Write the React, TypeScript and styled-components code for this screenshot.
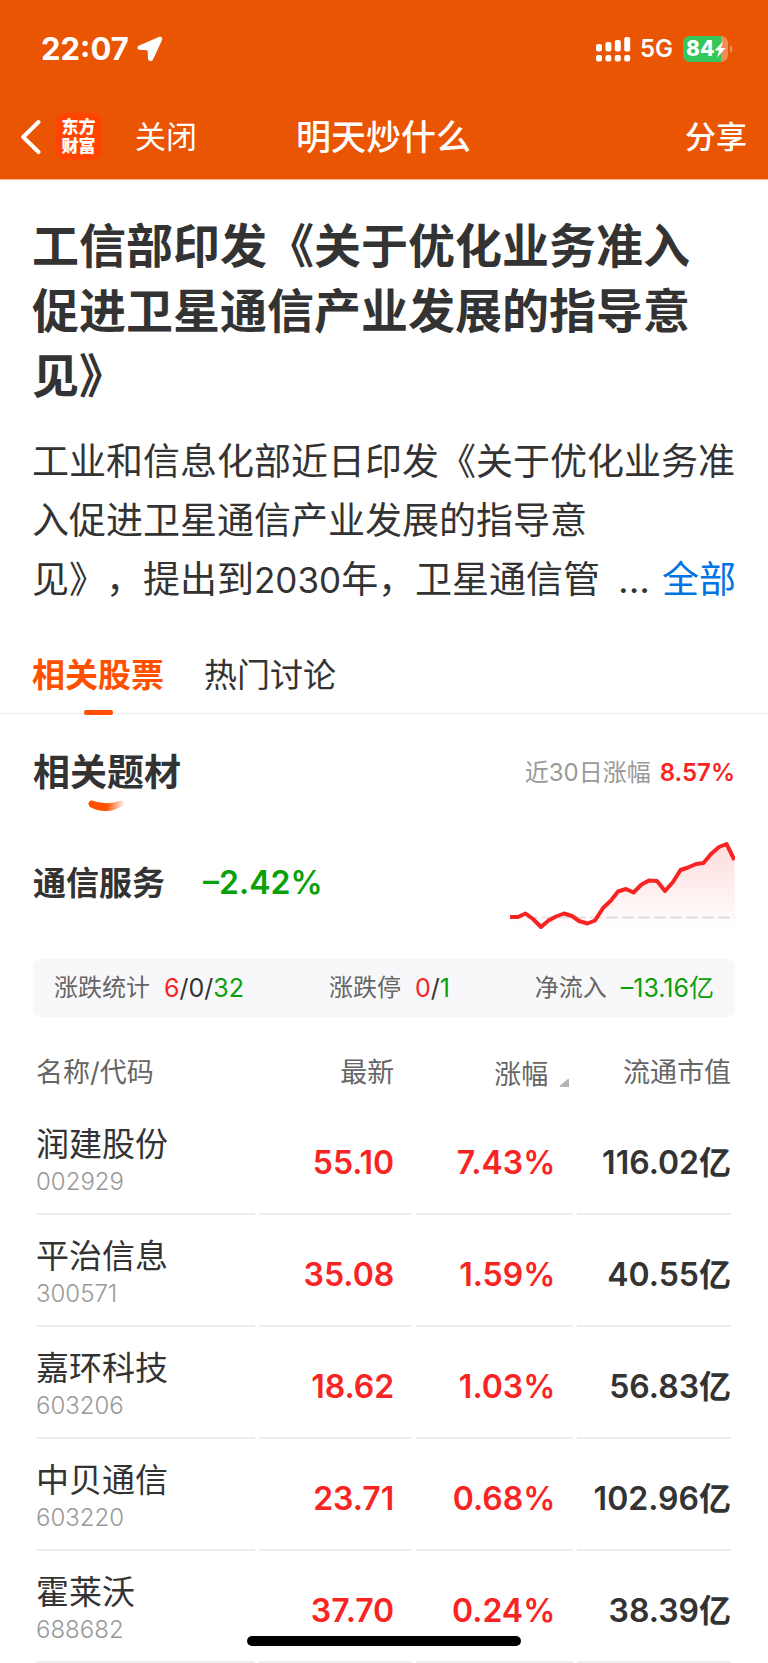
import React, { useState } from "react";
import styled, { createGlobalStyle } from "styled-components";

const color = {
  brand: "#ea5504",
  accent: "#ff5000",
  text: "#333333",
  label: "#666666",
  muted: "#999999",
  link: "#0073e6",
  rise: "#f82424",
  fall: "#0aa00a",
  line: "#eeeeee",
};

type Tone = "rise" | "fall" | "text";

const GlobalStyle = createGlobalStyle`
  *, *::before, *::after { box-sizing: border-box; }
  body {
    margin: 0;
    background: #ffffff;
    color: ${color.text};
    font-family: Inter, "Noto Sans CJK SC", sans-serif;
    text-spacing-trim: space-all;
  }
  h1, h2, h3, p { margin: 0; }
  button { border: 0; padding: 0; background: none; color: inherit; font: inherit; }
`;

const Page = styled.div`
  position: relative;
`;

const Header = styled.header`
  background: ${color.brand};
  border-bottom: 1px solid #f7b48f;
  color: #ffffff;
`;

const StatusBar = styled.div`
  display: flex;
  align-items: center;
  justify-content: space-between;
  height: 98px;
  padding: 0 35px 0 41px;
`;

const StatusGroup = styled.div`
  display: flex;
  align-items: center;
`;

const Clock = styled.span`
  margin-right: 8px;
  font-size: 31px;
  font-weight: 700;
  line-height: 36px;
`;

const Network = styled.span`
  margin: 0 10px 0 9px;
  font-size: 24px;
  font-weight: 600;
  line-height: 30px;
`;

const Battery = styled.span`
  display: flex;
  align-items: center;
  width: 45px;
  height: 26px;
  padding-left: 3px;
  border-radius: 7px;
  background: linear-gradient(90deg, #34c759 38px, #f28c55 38px);
  font-size: 21px;
  font-weight: 800;
  line-height: 26px;
`;

const NavBar = styled.nav`
  display: grid;
  grid-template-columns: 1fr auto 1fr;
  align-items: center;
  height: 81px;
  padding: 0 21px 4px 20px;
`;

const NavStart = styled.div`
  display: flex;
  align-items: center;
`;

const NavButton = styled.button<{ $weight?: number }>`
  display: flex;
  font-size: 31px;
  font-weight: ${(p) => p.$weight ?? 400};
  line-height: 46px;
`;

const EndButton = styled(NavButton)`
  justify-self: end;
`;

const AppLogo = styled.span`
  display: grid;
  place-content: center;
  width: 47px;
  height: 47px;
  margin: 0 33px 0 14px;
  border-radius: 10px;
  background: #ff4400;
  font-size: 17px;
  font-weight: 900;
  line-height: 19px;
`;

const NavTitle = styled.h1`
  font-size: 35px;
  font-weight: 500;
  line-height: 48px;
`;

const Article = styled.article`
  padding: 33px 32px 0;
`;

const Headline = styled.h2`
  font-size: 47px;
  font-weight: 600;
  line-height: 65px;
`;

const Summary = styled.p`
  margin-top: 24px;
  font-size: 37px;
  line-height: 59px;
`;

const SummaryEnd = styled.span`
  display: flex;
  justify-content: space-between;
`;

const Year = styled.span`
  font-size: 35px;
`;

const MoreLink = styled.a`
  margin-left: 12px;
  color: ${color.link};
  text-decoration: none;
`;

const TabList = styled.div`
  display: flex;
  gap: 40px;
  margin-top: 27px;
  padding: 0 32px;
  border-bottom: 1px solid ${color.line};
`;

const Tab = styled.button<{ $active: boolean }>`
  position: relative;
  height: 76px;
  color: ${(p) => (p.$active ? color.accent : color.text)};
  font-size: 33px;
  font-weight: ${(p) => (p.$active ? 600 : 400)};
  line-height: 76px;

  &::after {
    content: "";
    display: ${(p) => (p.$active ? "block" : "none")};
    position: absolute;
    bottom: -2px;
    left: 50%;
    width: 29px;
    height: 5px;
    margin-left: -14px;
    border-radius: 2px;
    background: ${color.accent};
  }
`;

const Section = styled.section`
  padding: 0 33px;
`;

const SectionHead = styled.div`
  display: flex;
  align-items: center;
  justify-content: space-between;
  height: 86px;
  margin-top: 16px;
`;

const SectionTitle = styled.h2`
  position: relative;
  font-size: 37px;
  font-weight: 600;
  line-height: 54px;

  svg {
    position: absolute;
    top: 54px;
    left: 55px;
  }
`;

const Period = styled.p`
  display: flex;
  gap: 9px;
  color: ${color.muted};
  font-size: 24px;
  line-height: 36px;
`;

const Value = styled.span<{ $tone: Tone; $weight?: number }>`
  color: ${(p) => color[p.$tone]};
  font-weight: ${(p) => p.$weight ?? 400};
`;

const Theme = styled.div`
  display: flex;
  align-items: center;
  height: 134px;
  font-size: 32px;
  line-height: 48px;

  svg {
    margin: 6px 0 0 auto;
  }
`;

const ThemeName = styled.h3`
  margin-right: 38px;
  font-size: 33px;
  font-weight: 600;
`;

const Stats = styled.dl`
  display: flex;
  justify-content: space-between;
  margin: 9px 0 0;
  padding: 11px 21px;
  border-radius: 8px;
  background: #f8f8fa;
  font-size: 24px;
  line-height: 36px;
`;

const Stat = styled.div`
  display: flex;
  gap: 14px;

  dt { color: ${color.label}; }
  dd { margin: 0; font-size: 25px; }
`;

const StockTable = styled.table`
  width: calc(100% - 65px);
  margin: 26px 33px 0 32px;
  table-layout: fixed;
  border-collapse: separate;
  border-spacing: 4px 0;
`;

const HeadCell = styled.th<{ $width: string; $end?: number }>`
  width: ${(p) => p.$width};
  height: 60px;
  padding: 0 ${(p) => p.$end ?? 0}px 0 0;
  color: ${color.label};
  font-size: 27px;
  font-weight: 400;
  line-height: 40px;
  text-align: right;

  &:first-child { text-align: left; }
`;

const SortButton = styled.button`
  display: inline-flex;
  align-items: center;
  gap: 11px;
  padding-top: 4px;

  svg { margin-top: 14px; }
`;

const NameCell = styled.th`
  height: 112px;
  padding: 4px 0 0;
  border-bottom: 2px solid ${color.line};
  text-align: left;
  font-weight: 400;
`;

const StockName = styled.span`
  display: block;
  font-size: 33px;
  line-height: 44px;
`;

const StockCode = styled.span`
  display: block;
  color: ${color.muted};
  font-size: 24px;
  font-weight: 300;
  line-height: 32px;
`;

const NumberCell = styled.td<{ $tone: Tone; $end?: number }>`
  padding: 10px ${(p) => p.$end ?? 0}px 0 0;
  border-bottom: 2px solid ${color.line};
  color: ${(p) => color[p.$tone]};
  font-size: 32px;
  font-weight: 600;
  line-height: 48px;
  text-align: right;
  white-space: nowrap;
`;

const HomeIndicator = styled.div`
  position: fixed;
  bottom: 17px;
  left: 50%;
  width: 274px;
  height: 10px;
  border-radius: 5px;
  background: #000000;
  transform: translateX(-50%);
`;

const LocationIcon = () => (
  <svg width="26" height="26" viewBox="0 0 26 26" aria-hidden="true">
    <path
      d="M22.6 1.6 L2 10.4 Q0.4 11.6 2 13 L10.2 13.4 Q11.4 13.6 11.4 14.8 L11.8 23 Q13.4 25.4 15.2 23.4 L24.4 3.4 Q24.8 1 22.6 1.6 Z"
      fill="#fff"
      stroke="#fff"
      strokeWidth="1.6"
      strokeLinejoin="round"
    />
  </svg>
);

const SignalIcon = () => (
  <svg width="35" height="25" viewBox="0 0 35 25" fill="#fff" aria-hidden="true">
    {[7, 5, 3, 0].map((top, i) => (
      <React.Fragment key={top}>
        <rect x={i * 9.4} y={top} width="6" height={14.5 - top} rx="2" />
        <rect x={i * 9.4} y="18" width="6" height="6.5" rx="2" />
      </React.Fragment>
    ))}
  </svg>
);

const BoltIcon = () => (
  <svg width="12" height="17" viewBox="0 0 12 17" aria-hidden="true">
    <path d="M9 0.5 L0.5 9.6 L5 9.6 L3.2 16.5 L11.6 7 L7 7 Z" fill="#fff" />
  </svg>
);

const BatteryTip = () => (
  <svg width="5" height="8" viewBox="0 0 5 8" aria-hidden="true">
    <path d="M2 0 Q4.6 1.4 4.6 4 Q4.6 6.6 2 8 Z" fill="#f28c55" />
  </svg>
);

const BackIcon = () => (
  <svg width="21" height="36" viewBox="0 0 21 36" aria-hidden="true">
    <path
      d="M18.5 3 L3.2 18 L18.5 33"
      fill="none"
      stroke="#fff"
      strokeWidth="4"
      strokeLinecap="round"
      strokeLinejoin="round"
    />
  </svg>
);

const SmileMark = () => (
  <svg width="37" height="12" viewBox="0 0 37 12" aria-hidden="true">
    <defs>
      <linearGradient id="smile" x1="0" x2="1" y1="0" y2="0">
        <stop offset="0.5" stopColor={color.accent} />
        <stop offset="1" stopColor={color.accent} stopOpacity="0.05" />
      </linearGradient>
    </defs>
    <path
      d="M3.2 0.3 Q17 6 33.5 0.6 Q38.5 2.6 35.6 5.4 Q18 15.6 2 7 Q-1.8 2.6 3.2 0.3 Z"
      fill="url(#smile)"
    />
  </svg>
);

const SortMark = () => (
  <svg width="10" height="9" viewBox="0 0 10 9" aria-hidden="true">
    <path d="M10 2 Q10 0 8.6 1.2 L0.8 7.8 Q0 9 1.4 9 H10 Z" fill="#b4b4b4" />
  </svg>
);

const trend = [
  [0, 75], [8, 75], [15.5, 71.5], [23, 77], [31, 85], [38.5, 78.5], [46, 74.5],
  [54, 71.5], [62, 74], [69, 79], [77.5, 81.5], [85, 78.5], [93, 66], [101, 58.5],
  [108, 49.5], [116, 47], [123.5, 50.5], [131.5, 42.5], [139, 38.5], [147, 39],
  [155, 49], [163, 40], [170.5, 28], [178, 25.5], [186, 22], [193.5, 21],
  [201, 12], [209, 5], [216.5, 2], [224.5, 18],
];

const TrendChart = () => {
  const line = trend.map(([x, y]) => `${x},${y}`).join(" ");
  return (
    <svg width="225" height="88" viewBox="0 0 225 88" role="img" aria-label="近30日走势">
      <defs>
        <linearGradient id="trend" x1="0" x2="0" y1="0" y2="1">
          <stop offset="0" stopColor={color.rise} stopOpacity="0.16" />
          <stop offset="1" stopColor={color.rise} stopOpacity="0" />
        </linearGradient>
      </defs>
      <path d="M0 75.5 H225" stroke="#e2e2e2" strokeWidth="2" strokeDasharray="12 4" />
      <polygon points={`0,88 ${line} 225,88`} fill="url(#trend)" />
      <polyline points={line} fill="none" stroke={color.rise} strokeWidth="4" strokeLinejoin="round" />
    </svg>
  );
};

const stocks = [
  { name: "润建股份", code: "002929", price: "55.10", change: "7.43%", cap: "116.02亿" },
  { name: "平治信息", code: "300571", price: "35.08", change: "1.59%", cap: "40.55亿" },
  { name: "嘉环科技", code: "603206", price: "18.62", change: "1.03%", cap: "56.83亿" },
  { name: "中贝通信", code: "603220", price: "23.71", change: "0.68%", cap: "102.96亿" },
  { name: "霍莱沃", code: "688682", price: "37.70", change: "0.24%", cap: "38.39亿" },
];

const tabs = ["相关股票", "热门讨论"];

export default function App() {
  const [active, setActive] = useState(tabs[0]);

  return (
    <Page>
      <GlobalStyle />
      <Header>
        <StatusBar>
          <StatusGroup>
            <Clock>22:07</Clock>
            <LocationIcon />
          </StatusGroup>
          <StatusGroup>
            <SignalIcon />
            <Network>5G</Network>
            <Battery>
              84
              <BoltIcon />
            </Battery>
            <BatteryTip />
          </StatusGroup>
        </StatusBar>
        <NavBar>
          <NavStart>
            <NavButton aria-label="返回">
              <BackIcon />
            </NavButton>
            <AppLogo>
              <span>东方</span>
              <span>财富</span>
            </AppLogo>
            <NavButton>关闭</NavButton>
          </NavStart>
          <NavTitle>明天炒什么</NavTitle>
          <EndButton $weight={500}>分享</EndButton>
        </NavBar>
      </Header>

      <main>
        <Article>
          <Headline>工信部印发《关于优化业务准入促进卫星通信产业发展的指导意见》</Headline>
          <Summary>
            工业和信息化部近日印发《关于优化业务准入促进卫星通信产业发展的指导意
            <SummaryEnd>
              <span>
                见》，提出到<Year>2030</Year>年，卫星通信管
              </span>
              <span>
                ...<MoreLink href="#all">全部</MoreLink>
              </span>
            </SummaryEnd>
          </Summary>
        </Article>

        <TabList role="tablist">
          {tabs.map((tab) => (
            <Tab
              key={tab}
              role="tab"
              aria-selected={tab === active}
              $active={tab === active}
              onClick={() => setActive(tab)}
            >
              {tab}
            </Tab>
          ))}
        </TabList>

        <Section>
          <SectionHead>
            <SectionTitle>
              相关题材
              <SmileMark />
            </SectionTitle>
            <Period>
              近30日涨幅
              <Value $tone="rise" $weight={600}>8.57%</Value>
            </Period>
          </SectionHead>
          <Theme>
            <ThemeName>通信服务</ThemeName>
            <Value $tone="fall" $weight={600}>–2.42%</Value>
            <TrendChart />
          </Theme>
          <Stats>
            <Stat>
              <dt>涨跌统计</dt>
              <dd>
                <Value $tone="rise">6</Value>/0/<Value $tone="fall">32</Value>
              </dd>
            </Stat>
            <Stat>
              <dt>涨跌停</dt>
              <dd>
                <Value $tone="rise">0</Value>/<Value $tone="fall">1</Value>
              </dd>
            </Stat>
            <Stat>
              <dt>净流入</dt>
              <dd>
                <Value $tone="fall">–13.16亿</Value>
              </dd>
            </Stat>
          </Stats>
        </Section>

        <StockTable>
          <thead>
            <tr>
              <HeadCell $width="32%">名称/代码</HeadCell>
              <HeadCell $width="22.5%" $end={18}>最新</HeadCell>
              <HeadCell $width="23%" $end={4}>
                <SortButton>
                  涨幅
                  <SortMark />
                </SortButton>
              </HeadCell>
              <HeadCell $width="22.5%">流通市值</HeadCell>
            </tr>
          </thead>
          <tbody>
            {stocks.map((stock) => (
              <tr key={stock.code}>
                <NameCell scope="row">
                  <StockName>{stock.name}</StockName>
                  <StockCode>{stock.code}</StockCode>
                </NameCell>
                <NumberCell $tone="rise" $end={18}>{stock.price}</NumberCell>
                <NumberCell $tone="rise" $end={18}>{stock.change}</NumberCell>
                <NumberCell $tone="text">{stock.cap}</NumberCell>
              </tr>
            ))}
          </tbody>
        </StockTable>
      </main>
      <HomeIndicator />
    </Page>
  );
}
